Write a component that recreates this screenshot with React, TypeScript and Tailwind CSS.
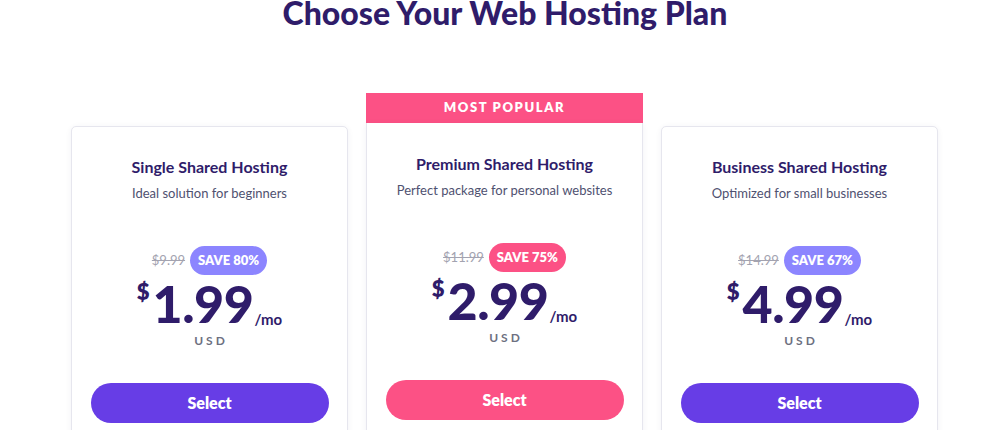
const plans = [
  {
    name: 'Single Shared Hosting',
    blurb: 'Ideal solution for beginners',
    old: '$9.99',
    save: 'SAVE 80%',
    price: '1.99',
    popular: false,
  },
  {
    name: 'Premium Shared Hosting',
    blurb: 'Perfect package for personal websites',
    old: '$11.99',
    save: 'SAVE 75%',
    price: '2.99',
    popular: true,
  },
  {
    name: 'Business Shared Hosting',
    blurb: 'Optimized for small businesses',
    old: '$14.99',
    save: 'SAVE 67%',
    price: '4.99',
    popular: false,
  },
]

type Plan = (typeof plans)[number]

function PlanCard({ plan }: { plan: Plan }) {
  return (
    <div className={`w-[277px] flex flex-col ${plan.popular ? '' : 'mt-[33px]'}`}>
      {plan.popular && (
        <div className="h-[30px] bg-[#fc5185] text-white text-[13px] font-extrabold tracking-[1.6px] flex items-center justify-center">
          MOST POPULAR
        </div>
      )}
      <div
        className={`h-[340px] bg-white border border-[#e6e6ee] shadow-[0_1px_6px_rgba(30,20,80,0.06)] flex flex-col items-center px-[18px] ${
          plan.popular ? 'border-t-0 rounded-b-[4px] pt-[31px]' : 'rounded-[5px] pt-[30px]'
        }`}
      >
        <h3 className="text-[16px] leading-5 font-bold text-[#2f1c6a]">{plan.name}</h3>
        <p className="mt-[7px] text-[13px] leading-[18px] text-[#4f5170]">{plan.blurb}</p>
        <div className="mt-[44px] flex items-center gap-[5px]">
          <span className="text-[13px] text-[#a3a3b0] line-through">{plan.old}</span>
          <span
            className={`h-[29px] px-[8px] rounded-full text-white text-[13px] font-extrabold flex items-center ${
              plan.popular ? 'bg-[#fc5185]' : 'bg-[#8c85ff]'
            }`}
          >
            {plan.save}
          </span>
        </div>
        <div className="mt-[4px] flex items-start text-[#2f1c6a] h-[48px]">
          <span className="text-[22px] font-extrabold leading-none mt-[2px] mr-[3px]">$</span>
          <span className="text-[52px] font-black leading-[48px] tracking-[-0.5px]">{plan.price}</span>
          <span className="text-[15px] font-bold self-end leading-none mb-0 ml-[1px]">/mo</span>
        </div>
        <div className="mt-[5px] text-[12px] font-bold tracking-[3px] text-[#6d7081] pl-[3px]">USD</div>
        <button
          className={`mt-[33px] w-[238px] h-[40px] rounded-full text-white text-[16px] font-extrabold ${
            plan.popular ? 'bg-[#fc5185]' : 'bg-[#673de6]'
          }`}
        >
          Select
        </button>
      </div>
    </div>
  )
}

export default function App() {
  return (
    <div className="w-[1000px] h-[430px] overflow-hidden bg-white font-['Lato',sans-serif]">
      <h1 className="mt-[-5px] ml-[10px] text-center text-[32px] leading-9 font-black text-[#2f1c6a]">
        Choose Your Web Hosting Plan
      </h1>
      <div className="mt-[62px] ml-[71px] flex items-start gap-[18px]">
        {plans.map((plan) => (
          <PlanCard key={plan.name} plan={plan} />
        ))}
      </div>
    </div>
  )
}
